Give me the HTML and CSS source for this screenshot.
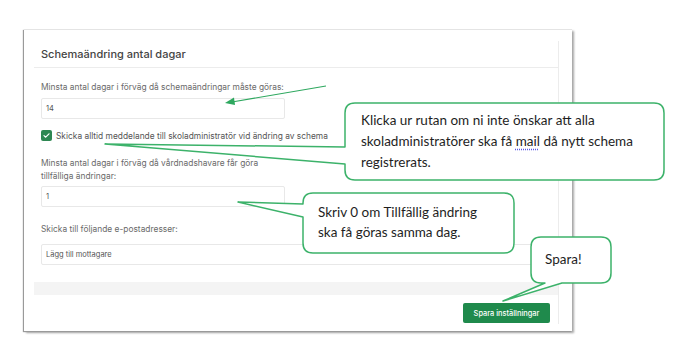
FILE: index.html
```html
<!DOCTYPE html>
<html lang="sv">
<head>
  <meta charset="UTF-8" />
  <title>Schemaändring antal dagar</title>
  <link rel="stylesheet" href="styles.css">
</head>
<body>

  <div class="shot">
    <div class="panel">
      <div class="panel-head">Schemaändring antal dagar</div>
      <div class="panel-body">
        <label class="field-label">Minsta antal dagar i förväg då schemaändringar måste göras:</label>
        <div class="input">14</div>

        <div class="check-row">
          <span class="check">
            <svg width="11" height="11" viewBox="0 0 11 11"><path d="M3 5.6 L4.7 7.2 L8 3.8" fill="none" stroke="#fff" stroke-width="1.2" stroke-linecap="round" stroke-linejoin="round"/></svg>
          </span>
          <span class="check-text">Skicka alltid meddelande till skoladministratör vid ändring av schema</span>
        </div>

        <label class="field-label wrap">Minsta antal dagar i förväg då vårdnadshavare får göra tillfälliga ändringar:</label>
        <div class="input">1</div>

        <label class="field-label last">Skicka till följande e-postadresser:</label>
        <div class="input wide">Lägg till mottagare</div>
      </div>
      <div class="panel-bar"></div>
      <div class="panel-foot">
        <button class="save">Spara inställningar</button>
      </div>
    </div>
  </div>

  <!-- annotations drawn over the screenshot -->
  <svg class="notes" width="690" height="352" viewBox="0 0 690 352">
    <g fill="#fff" stroke="#3cb26a" stroke-width="1.5" stroke-linejoin="round">
      <path d="M355,103 H654 Q664,103 664,113 V170 Q664,180 654,180 H355 Q345,180 345,170 V164 L105,144 L345,147 V113 Q345,103 355,103 Z"/>
      <path d="M313,193 H504 Q514,193 514,203 V243 Q514,253 504,253 H313 Q303,253 303,243 V217 L238,202 L303,204 V203 Q303,193 313,193 Z"/>
      <path d="M541,237 H601 Q611,237 611,247 V273 Q611,283 601,283 H562 L503,301 L545,283 H541 Q531,283 531,273 V247 Q531,237 541,237 Z"/>
    </g>
    <line x1="326" y1="86" x2="232" y2="102" stroke="#2ea85f" stroke-width="1.2"/>
    <polygon points="225,103 234,97.5 235,105" fill="#2ea85f"/>
  </svg>

  <div class="note note-mail">Klicka ur rutan om ni inte önskar att alla<br>skoladministratörer ska få <span class="spell">mail</span> då nytt schema<br>registrerats.</div>
  <div class="note note-zero">Skriv 0 om Tillfällig ändring<br>ska få göras samma dag.</div>
  <div class="note note-save">Spara!</div>

</body>
</html>
```

FILE: styles.css
```css
body {
  margin: 0;
  padding: 0;
  width: 690px;
  height: 352px;
  background: #ffffff;
  font-family: 'Inter', sans-serif;
  position: relative;
  overflow: hidden;
}

.shot {
  margin: 29px 0 0 24px;
  width: 548px;
  height: 302px;
  box-sizing: border-box;
  padding: 11px 0 0 10px;
  background: #fff;
  border-top: 1px solid #e4e4e4;
  box-shadow: -1px 1px 1px #9a9a9a, 2px 2px 2px rgba(0, 0, 0, 0.35);
}

.panel {
  width: 524px;
  border-right: 1px solid #ececec;
}

.panel-head {
  height: 26px;
  line-height: 26px;
  padding-left: 7px;
  font-size: 11px;
  font-weight: 500;
  color: #444;
  border-bottom: 1px solid #ececec;
}

.panel-body {
  padding: 14px 7px 0 7px;
  display: flex;
  flex-direction: column;
  align-items: flex-start;
}

.field-label {
  display: block;
  font-size: 8.4px;
  line-height: 10px;
  color: #6a6a6a;
  margin-bottom: 6px;
}

.field-label.wrap {
  width: 250px;
  line-height: 13px;
  margin-bottom: 3px;
}

.field-label.last {
  margin-bottom: 10px;
}

.input {
  width: 244px;
  height: 21px;
  box-sizing: border-box;
  border: 1px solid #e8e8e8;
  border-radius: 2px;
  padding-left: 4px;
  font-size: 7.5px;
  line-height: 19px;
  color: #555;
  margin-bottom: 17px;
}

.input.wide {
  width: 510px;
}

.check-row {
  display: flex;
  align-items: center;
  gap: 4px;
  margin: -6px 0 16px 0;
}

.check {
  width: 11px;
  height: 11px;
  border-radius: 2px;
  background: #2e8752;
  display: flex;
}

.check-text {
  font-size: 8.4px;
  color: #555;
}

.panel-bar {
  height: 13px;
  background: #f4f4f4;
}

.panel-foot {
  display: flex;
  justify-content: flex-end;
  padding: 8px 8px 1px 0;
}

.save {
  width: 87px;
  height: 20px;
  border: none;
  border-radius: 2px;
  background: #1f8a4c;
  color: #fff;
  font-family: 'Inter', sans-serif;
  font-size: 7.4px;
  font-weight: 500;
  padding: 0;
}

.notes {
  position: absolute;
  left: 0;
  top: 0;
}

.note {
  position: absolute;
  font-family: 'Lato', sans-serif;
  font-size: 13.5px;
  color: #1e1e1e;
  white-space: nowrap;
}

.note-mail {
  left: 361px;
  top: 110px;
  line-height: 21px;
}

.note-zero {
  left: 318px;
  top: 202px;
  line-height: 20px;
}

.note-save {
  left: 545px;
  top: 249px;
  line-height: 20px;
}

.spell {
  text-decoration: underline dotted #5a5ae6;
  text-underline-offset: 3px;
}
```
